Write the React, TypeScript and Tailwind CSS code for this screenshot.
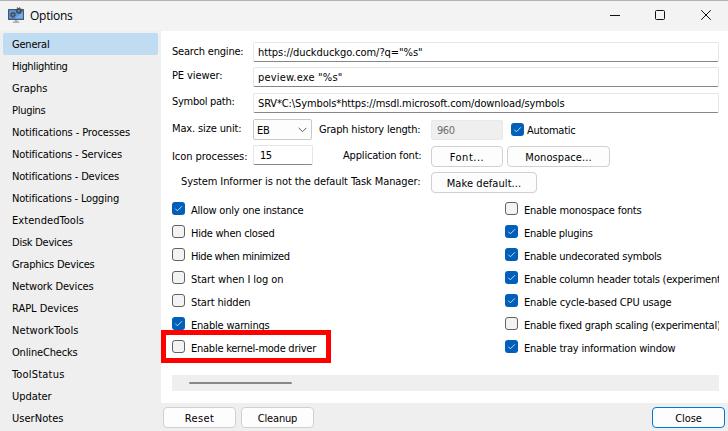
import { useLayoutEffect, useRef, useState } from "react";

type FitProps = { text: string; w: number; className?: string };

/** Single-line label whose tracking is tuned so that it takes up `w` pixels. */
function Fit({ text, w, className = "" }: FitProps) {
  const ref = useRef<HTMLSpanElement>(null);
  const [tracking, setTracking] = useState(0);
  useLayoutEffect(() => {
    const el = ref.current;
    if (!el) return;
    const natural = el.getBoundingClientRect().width - tracking * text.length;
    const next = (w + 0.5 - natural) / text.length;
    if (Math.abs(next - tracking) > 0.01) setTracking(next);
  }, [text, w]);
  return (
    <span
      ref={ref}
      className={`inline-block shrink-0 whitespace-pre leading-[13px] ${className}`}
      style={{ letterSpacing: `${tracking}px` }}
    >
      {text}
    </span>
  );
}

const pages: [string, number][] = [
  ["General", 37],
  ["Highlighting", 55],
  ["Graphs", 35],
  ["Plugins", 33],
  ["Notifications - Processes", 117.5],
  ["Notifications - Services", 109.5],
  ["Notifications - Devices", 106.5],
  ["Notifications - Logging", 106.5],
  ["ExtendedTools", 71.5],
  ["Disk Devices", 60],
  ["Graphics Devices", 82],
  ["Network Devices", 81],
  ["RAPL Devices", 66],
  ["NetworkTools", 66],
  ["OnlineChecks", 65],
  ["ToolStatus", 52],
  ["Updater", 39],
  ["UserNotes", 51],
];

type Option = { text: string; w: number; on?: boolean };

const leftOptions: Option[] = [
  { text: "Allow only one instance", w: 112, on: true },
  { text: "Hide when closed", w: 83 },
  { text: "Hide when minimized", w: 98 },
  { text: "Start when I log on", w: 92 },
  { text: "Start hidden", w: 59 },
  { text: "Enable warnings", w: 78, on: true },
  { text: "Enable kernel-mode driver", w: 124.5 },
];

const rightOptions: Option[] = [
  { text: "Enable monospace fonts", w: 117 },
  { text: "Enable plugins", w: 68, on: true },
  { text: "Enable undecorated symbols", w: 137, on: true },
  { text: "Enable column header totals (experimental)", w: 208, on: true },
  { text: "Enable cycle-based CPU usage", w: 147, on: true },
  { text: "Enable fixed graph scaling (experimental)", w: 196 },
  { text: "Enable tray information window", w: 151, on: true },
];

function Box({ on }: { on?: boolean }) {
  if (on)
    return (
      <span className="block size-[13px] shrink-0 rounded-[3px] bg-[#005fb8]">
        <svg viewBox="0 0 13 13" className="size-[13px]" fill="none" stroke="#d5e6f5" strokeWidth="0.9">
          <path d="M3.3 6.7 5.4 8.8 9.9 4.3" />
        </svg>
      </span>
    );
  return <span className="block size-[13px] shrink-0 rounded-[3px] border border-[#626262] bg-[#f3f3f3]" />;
}

function OptionList({ items }: { items: Option[] }) {
  return (
    <div className="flex flex-col">
      {items.map((o) => (
        <div key={o.text} className="flex h-[23px] items-start">
          <Box on={o.on} />
          <Fit text={o.text} w={o.w} className="ml-1.5 mt-0.5" />
        </div>
      ))}
    </div>
  );
}

function Field({ text, w, className }: FitProps) {
  return (
    <div className={`flex items-center rounded-[2px] border border-b-[#868686] border-[#e6e6e6] bg-white pl-1 ${className}`}>
      <Fit text={text} w={w} />
    </div>
  );
}

function Button({ text, w, className }: FitProps) {
  return (
    <div className={`flex h-[21px] shrink-0 items-center justify-center rounded-[4px] border bg-[#fdfdfd] ${className}`}>
      <Fit text={text} w={w} className="mt-px" />
    </div>
  );
}

function AppIcon() {
  return (
    <svg viewBox="0 0 17 17" className="h-[17px] w-[17px]">
      <rect x="0" y="2" width="16" height="11" rx="0.5" fill="#46586a" />
      <rect x="1.2" y="3.2" width="13.6" height="8.4" fill="#5c9ae0" />
      <path d="M7 11.6 14.8 5v6.6z" fill="#74aeea" />
      <rect x="6.8" y="13" width="2.6" height="2" fill="#a9b6c0" />
      <rect x="4.8" y="14.6" width="6.6" height="1.1" fill="#8b979f" />
      <circle cx="10.8" cy="3.7" r="1.9" fill="none" stroke="#444e57" strokeWidth="1.8" />
      <circle cx="10.8" cy="3.7" r="3" fill="none" stroke="#444e57" strokeWidth="1.1" strokeDasharray="1.2 1.15" />
      <circle cx="5" cy="7.8" r="1.7" fill="none" stroke="#444e57" strokeWidth="1.5" />
      <circle cx="5" cy="7.8" r="2.7" fill="none" stroke="#444e57" strokeWidth="1" strokeDasharray="1.1 1" />
    </svg>
  );
}

export default function App() {
  return (
    <div className="relative flex h-[431px] w-[728px] flex-col overflow-hidden bg-[#efefef] font-['DejaVu_Sans_Condensed','DejaVu_Sans',sans-serif] text-[11px] text-black [font-stretch:condensed]">
      <header className="flex h-[31px] shrink-0 border-t border-[#b3b3b3] bg-[#f3f3f3] pl-2">
        <div className="pt-[6px]">
          <AppIcon />
        </div>
        <Fit
          text="Options"
          w={42}
          className="ml-[5px] mt-2 font-['Open_Sans',sans-serif] text-[12px] [font-stretch:normal]"
        />
        <div className="ml-auto flex pr-[7px] pt-[8px]">
          <svg viewBox="0 0 112 12" className="h-3 w-[112px]" fill="none" stroke="#111">
            <path d="M1 6.5h10" />
            <rect x="46.5" y="1.5" width="9" height="9" rx="1" />
            <path d="M92.2 1.2l9.6 9.6M101.8 1.2l-9.6 9.6" />
          </svg>
        </div>
      </header>

      <div className="flex min-h-0 grow">
        <nav className="w-[161px] shrink-0 pl-[3px] pt-[2px]">
          {pages.map(([name, w], i) => (
            <div
              key={name}
              className={`flex h-[22px] w-[155px] items-center rounded-[2px] pl-[9px] ${i === 0 ? "bg-[#c0dcf3]" : ""}`}
            >
              <Fit text={name} w={w} />
            </div>
          ))}
        </nav>

        <div className="flex min-w-0 grow flex-col">
          <main className="h-[372px] shrink-0 bg-white pl-[11px] pr-[9px] pt-[11px]">
            <div className="flex h-[25px]">
              <Fit text="Search engine:" w={71} className="mt-[3px]" />
              <Field text={'https://duckduckgo.com/?q="%s"'} w={164} className="ml-auto h-5 w-[466px]" />
            </div>
            <div className="flex h-[26px]">
              <Fit text="PE viewer:" w={50} className="mt-[2px]" />
              <Field text={'peview.exe "%s"'} w={84} className="ml-auto h-5 w-[466px]" />
            </div>
            <div className="flex h-[26px]">
              <Fit text="Symbol path:" w={62} className="mt-[2px]" />
              <Field
                text="SRV*C:\Symbols*https://msdl.microsoft.com/download/symbols"
                w={306}
                className="ml-auto h-5 w-[466px]"
              />
            </div>

            <div className="flex h-[26px]">
              <div className="w-[81px] shrink-0 pt-[2px]">
                <Fit text="Max. size unit:" w={69} />
              </div>
              <div className="flex h-[21px] w-[59px] shrink-0 items-center justify-between rounded-[2px] border border-[#c9c9c9] bg-[#fdfdfd] pl-[3px] pr-1">
                <Fit text="EB" w={12} className="mt-px" />
                <svg viewBox="0 0 9 6" className="h-1.5 w-[9px]" fill="none" stroke="#5c5c5c">
                  <path d="M0.7 0.9 4.5 4.7 8.3 0.9" />
                </svg>
              </div>
              <Fit text="Graph history length:" w={101} className="ml-[7px] mt-[4px]" />
              <div className="ml-auto mt-px flex h-5 w-[72px] shrink-0 items-center rounded-[2px] border border-[#e9e9e9] bg-[#efefef] pl-[5px] text-[#6d6d6d]">
                <Fit text="960" w={17} />
              </div>
              <div className="ml-2 flex w-[208px] shrink-0 pt-[4px]">
                <Box on />
                <Fit text="Automatic" w={48} className="ml-[3px] mt-px" />
              </div>
            </div>

            <div className="flex h-[27px]">
              <div className="w-[81px] shrink-0 pt-1">
                <Fit text="Icon processes:" w={75} />
              </div>
              <Field text="15" w={11} className="h-5 w-[60px] shrink-0 pl-1.5" />
              <Fit text="Application font:" w={78} className="ml-[30px] mt-[4px]" />
              <Button text="Font..." w={34} className="ml-auto mt-px w-[72px] border-[#d0d0d0]" />
              <Button text="Monospace..." w={66} className="ml-1 mr-[109px] mt-px w-[103px] border-[#d0d0d0]" />
            </div>

            <div className="flex h-[30px]">
              <Fit text="System Informer is not the default Task Manager:" w={239} className="ml-[9px] mt-[3px]" />
              <Button text="Make default..." w={74} className="ml-auto mr-[182px] w-[106px] border-[#d0d0d0]" />
            </div>

            <div className="flex h-[173px] overflow-hidden">
              <div className="w-[333px] shrink-0">
                <OptionList items={leftOptions} />
              </div>
              <OptionList items={rightOptions} />
            </div>

            <div className="flex h-4 items-center bg-[#efefef] pl-[17px]">
              <div className="h-0.5 w-[103px] rounded-full bg-[#888]" />
            </div>
          </main>

          <footer className="flex grow pl-[2px] pr-[3px] pt-1">
            <Button text="Reset" w={29} className="w-[73px] border-[#d0d0d0]" />
            <Button text="Cleanup" w={39} className="ml-[5px] w-[73px] border-[#d0d0d0]" />
            <Button text="Close" w={26} className="ml-auto w-[73px] border-[#0078d4]" />
          </footer>
        </div>
      </div>

      <div className="pointer-events-none absolute left-[161px] top-[330px] h-[33px] w-[170px] border-[5px] border-[#fe0000]" />
    </div>
  );
}
